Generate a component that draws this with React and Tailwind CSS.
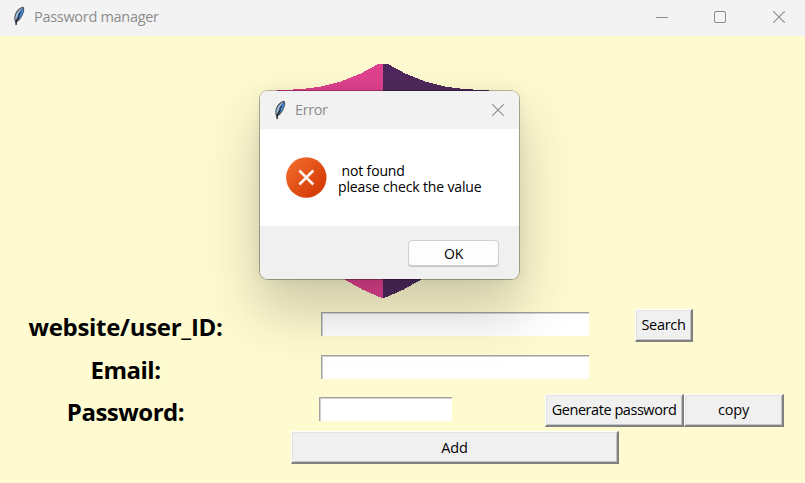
import React from "react";

function Feather() {
  return (
    <svg className="h-5 w-[14px] shrink-0" viewBox="0 0 14 20">
      <path d="M11.4 0.7 C8.5 0.8 4.6 4 3 8.2 C1.9 11.2 2.1 14.3 3.2 16 L3.8 19.5 L5 16 C8.2 14.2 11 9.5 12 5.5 C12.4 3.6 12.3 1.7 11.4 0.7Z" fill="#4a4d54" />
      <path d="M10.6 1.8 C7.4 3.2 4.3 6.6 3.5 10.5 C3.1 12.2 3.3 13.2 3.8 14.2 L8 5.5Z" fill="#9dbfe4" />
      <path d="M11.2 2 L7.1 8 L5 14.6 C8.2 12.8 10.6 8.3 11.4 5Z" fill="#4488d8" />
      <path d="M8.6 6 L7 8.2 L7 10.6 L4.2 16 V19" fill="none" stroke="#20242a" strokeWidth="1.1" />
    </svg>
  );
}

function CloseIcon() {
  return (
    <svg className="h-3 w-3" viewBox="0 0 12 12">
      <path d="M0.3 0.3 L11.7 11.7 M11.7 0.3 L0.3 11.7" stroke="#8b8b8b" strokeWidth="1.1" fill="none" />
    </svg>
  );
}

function Shield() {
  return (
    <svg className="ml-[276px] h-[236px] w-[214px]" viewBox="276 63 214 236" shapeRendering="crispEdges">
      <path d="M383 63.5 H379 C354 79 330 87 300 89.3 L277 90 V160 C277 226 318 274 383 298.5Z" fill="#df418e" />
      <path d="M383 63.5 H387 C412 79 436 87 466 89.3 L489 90 V160 C489 226 448 274 383 298.5Z" fill="#4f295d" />
    </svg>
  );
}

function Button({ className, children }) {
  return (
    <button className={"h-[33px] shrink-0 border-t border-l border-t-white border-l-white border-r-2 border-b-2 border-r-[#808080] border-b-[#808080] bg-[#f0f0f0] text-[14.5px] leading-[28px] whitespace-nowrap shadow-[inset_1px_1px_0_#e3e3e3,inset_-1px_-1px_0_#c4c4c4] " + className}>
      {children}
    </button>
  );
}

function Field({ className }) {
  return (
    <input className={"h-6 shrink-0 border-t border-l border-t-[#a0a0a0] border-l-[#a0a0a0] bg-white outline-none shadow-[inset_1px_1px_0_#d2d2d2] " + className} />
  );
}

function Label({ className, children }) {
  return (
    <label className={"w-[251px] shrink-0 text-center text-[24px] leading-[30px] font-bold whitespace-nowrap " + className}>
      {children}
    </label>
  );
}

function ErrorDialog() {
  return (
    <div className="absolute top-[90px] left-[259px] flex h-[190px] w-[261px] flex-col overflow-hidden rounded-[9px] border border-black/30 border-t-black/25 bg-white bg-clip-padding shadow-[0_30px_54px_4px_rgba(0,0,0,0.19),0_0_14px_rgba(0,0,0,0.06)]">
      <div className="flex h-[38px] items-center bg-[#f2f2f2] pr-[15px] pl-[13px] text-[#8c8c8c]">
        <Feather />
        <span className="ml-2 flex-1 text-[14.5px] tracking-[-0.4px]">Error</span>
        <CloseIcon />
      </div>
      <div className="flex h-[97px] items-start pt-[28px] pl-[26px]">
        <svg className="h-[41px] w-[41px]" viewBox="0 0 41 41">
          <defs>
            <linearGradient id="error" x1="0" y1="0" x2="1" y2="1">
              <stop offset="0.1" stopColor="#f06a2b" />
              <stop offset="0.9" stopColor="#d33802" />
            </linearGradient>
          </defs>
          <circle cx="20.3" cy="20.5" r="20.2" fill="url(#error)" />
          <path d="M13.3 13.5 L27.3 27.5 M27.3 13.5 L13.3 27.5" stroke="#fdf3ee" strokeWidth="2.6" />
        </svg>
        <p className="ml-[11px] pt-[6px] text-[14px] leading-4 font-medium tracking-[-0.14px] whitespace-pre">
          {" not found\nplease check the value"}
        </p>
      </div>
      <div className="flex flex-1 items-start justify-end bg-[#f0f0f0] pt-[14px] pr-5">
        <button className="h-[26px] w-[91px] rounded-[4px] border border-[#d0d0d0] bg-[#fdfdfd] pt-[1px] text-[14px] leading-6 tracking-[-0.3px] shadow-[0_1px_0_#c4c4c4]">OK</button>
      </div>
    </div>
  );
}

export default function App() {
  return (
    <div className="relative h-[483px] w-[805px] overflow-hidden bg-[#fffbd1] font-['Open_Sans','Noto_Sans',sans-serif] text-black">
      <header className="flex h-9 items-center bg-[#f3f3f3] pr-[20px] pl-[12px] text-[#8c8c8c]">
        <div className="-mt-1 flex flex-1 items-center">
          <Feather />
          <span className="ml-2 pt-[2px] text-[14.5px] tracking-[-0.3px]">Password manager</span>
        </div>
        <div className="-mt-[2px] flex items-center">
          <div className="h-px w-3 bg-[#8b8b8b]" />
          <div className="ml-[46px] h-3 w-3 rounded-[2px] border border-[#8b8b8b]" />
          <div className="ml-[47px]"><CloseIcon /></div>
        </div>
      </header>
      <main>
        <div className="h-[273px] pt-[27px]"><Shield /></div>
        <div className="flex h-[43px] items-start">
          <Label className="pt-[3px] tracking-[-0.3px]">website/user_ID:</Label>
          <Field className="mt-[3px] ml-[70px] w-[268px]" />
          <Button className="ml-[46px] w-[58px] tracking-[-0.3px]">Search</Button>
        </div>
        <div className="flex h-[42px] items-start">
          <Label className="pt-[3px] tracking-[-0.5px]">Email:</Label>
          <Field className="mt-[3px] ml-[70px] w-[268px]" />
        </div>
        <div className="flex h-[37px] items-start">
          <Label className="pt-[3px] tracking-[-0.5px]">Password:</Label>
          <Field className="mt-[3px] ml-[68px] w-[133px]" />
          <Button className="ml-[93px] w-[139px] tracking-[-0.45px]">Generate password</Button>
          <Button className="w-[100px] tracking-[-0.2px]">copy</Button>
        </div>
        <Button className="ml-[291px] w-[328px] pt-[1px] tracking-[-0.1px]">Add</Button>
      </main>
      <ErrorDialog />
    </div>
  );
}
